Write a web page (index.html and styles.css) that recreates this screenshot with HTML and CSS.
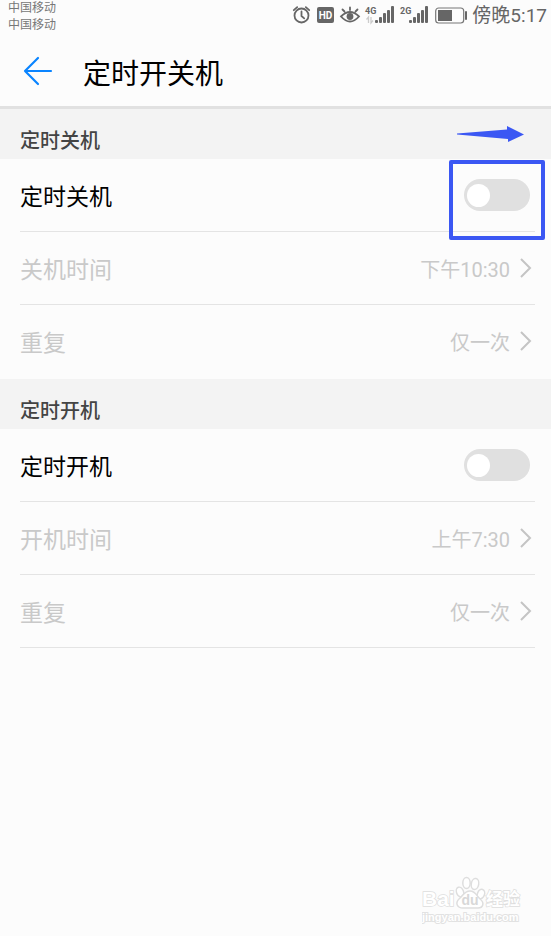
FILE: index.html
```html
<!DOCTYPE html>
<html lang="zh-CN">
<head>
<meta charset="utf-8">
<meta name="viewport" content="width=device-width, initial-scale=1">
<title>定时开关机</title>
<link rel="stylesheet" href="styles.css">
</head>
<body>
<div class="status">
  <div class="carriers"><span>中国移动</span><span>中国移动</span></div>
  <div class="indicators">
    <svg class="status-icons" width="176" height="24" viewBox="0 0 176 24" aria-hidden="true">
      <g fill="none" stroke="#666" stroke-width="1.8" stroke-linecap="round">
        <circle cx="9.500" cy="12.500" r="7"/>
        <path d="M9.500 8.500v4.500l2.700 2.400M1.800 7.200l3.400-3M17.200 7.200l-3.400-3"/>
      </g>
      <rect x="25" y="4" width="17" height="16" rx="2" fill="#666"/>
      <text x="33.500" y="16" class="hd">HD</text>
      <g fill="none" stroke="#666" stroke-width="1.800" stroke-linecap="round">
        <path d="M49 13.500q9-9 18 0q-9 10-18 0zM58 7V4.500M52.500 8.500l-2-2M63.500 8.500l2-2"/>
      </g>
      <circle cx="58" cy="13.500" r="3.400" fill="#666"/>
      <text x="73" y="11" class="net">4G</text>
      <path d="M76.500 20v-6l-2 2.500M79 14v6l2-2.500" fill="none" stroke="#ccc" stroke-width="1.300"/>
      <g fill="#666">
        <rect x="83" y="17" width="3" height="3" rx="1"/><rect x="87" y="14" width="3" height="6" rx="1"/><rect x="91" y="10" width="3" height="10" rx="1"/><rect x="95" y="7" width="3" height="13" rx="1"/><rect x="99" y="3" width="3" height="17" rx="1"/>
        <rect x="117" y="17" width="3" height="3" rx="1"/><rect x="121" y="14" width="3" height="6" rx="1"/><rect x="125" y="10" width="3" height="10" rx="1"/><rect x="129" y="7" width="3" height="13" rx="1"/><rect x="133" y="3" width="3" height="17" rx="1"/>
        <rect x="146" y="7" width="14" height="11"/>
        <rect x="173" y="8" width="2" height="9" rx="1"/>
      </g>
      <text x="108" y="11" class="net">2G</text>
      <rect x="143.700" y="5" width="28" height="15" rx="3" fill="none" stroke="#777" stroke-width="1.200"/>
    </svg>
    <time>傍晚5:17</time>
  </div>
</div>
<header class="titlebar">
  <button class="back" type="button" aria-label="返回">
    <svg width="30" height="30" viewBox="0 0 30 30" fill="none" stroke="#0a84ff" stroke-width="2.200" stroke-linecap="round" stroke-linejoin="round"><path d="M28 15H2M15 2L2 15l13 13"/></svg>
  </button>
  <h1>定时开关机</h1>
</header>
<main>
  <section>
    <div class="section-head">
      <h2>定时关机</h2>
      <svg class="pointer" width="68" height="16" viewBox="0 0 68 16" aria-hidden="true"><path d="M0 7.500L50 3.500V0L67 8.500L51 16V13L0 8.500z" fill="#3b57f3"/></svg>
    </div>
    <div class="list">
      <div class="row">
        <label for="off">定时关机</label>
        <span class="highlighted"><input id="off" class="switch" type="checkbox" role="switch"></span>
      </div>
      <button class="row muted" type="button"><span class="name">关机时间</span><span class="value"><span>下午10:30</span><svg width="13" height="22" viewBox="0 0 13 22"><path d="M2 2l9 9-9 9"/></svg></span></button>
      <button class="row muted plain" type="button"><span class="name">重复</span><span class="value"><span>仅一次</span><svg width="13" height="22" viewBox="0 0 13 22"><path d="M2 2l9 9-9 9"/></svg></span></button>
    </div>
  </section>
  <section>
    <div class="section-head"><h2>定时开机</h2></div>
    <div class="list">
      <div class="row">
        <label for="on">定时开机</label>
        <input id="on" class="switch" type="checkbox" role="switch">
      </div>
      <button class="row muted" type="button"><span class="name">开机时间</span><span class="value"><span>上午7:30</span><svg width="13" height="22" viewBox="0 0 13 22"><path d="M2 2l9 9-9 9"/></svg></span></button>
      <button class="row muted" type="button"><span class="name">重复</span><span class="value"><span>仅一次</span><svg width="13" height="22" viewBox="0 0 13 22"><path d="M2 2l9 9-9 9"/></svg></span></button>
    </div>
  </section>
</main>
<footer class="watermark">
  <svg width="100" height="50" viewBox="0 0 100 50" role="img" aria-label="Baidu 经验">
    <g fill="#fff" stroke="#dedede" stroke-width="1.500">
      <text x="0" y="30" class="bai">Bai</text>
      <ellipse cx="38" cy="16" rx="3.500" ry="5" transform="rotate(-20 38 16)"/>
      <ellipse cx="44.500" cy="7" rx="3.700" ry="5.500"/>
      <ellipse cx="53" cy="8" rx="3.700" ry="5.500" transform="rotate(10 53 8)"/>
      <ellipse cx="59" cy="18" rx="3.500" ry="4.800" transform="rotate(20 59 18)"/>
      <path d="M48 15c6 0 7 6 10 8c5 4 3 9-2 9H41c-6 0-8-5-4-9c4-3 5-8 11-8z"/>
      <text x="64" y="29" class="exp">经验</text>
    </g>
    <text x="48" y="29" class="du">du</text>
    <text x="0" y="45" class="url">jingyan.baidu.com</text>
  </svg>
</footer>
</body>
</html>
```
FILE: styles.css
```css
* { box-sizing: border-box; }

body {
  margin: 0;
  min-height: 100vh;
  display: flex;
  flex-direction: column;
  background: #fcfcfc;
  color: #000;
  font-family: Roboto, "Noto Sans CJK SC", sans-serif;
}

h1, h2 { margin: 0; font-weight: 400; }

button {
  border: 0;
  padding: 0;
  background: none;
  font-family: inherit;
}

.status {
  display: flex;
  justify-content: space-between;
  align-items: flex-start;
  height: 36px;
  padding: 0 4px 0 8px;
  color: #666;
}

.carriers {
  display: flex;
  flex-direction: column;
  font-size: 12px;
  line-height: 17px;
  color: #777;
}

.indicators {
  display: flex;
  gap: 4px;
  padding-top: 3px;
}

time {
  font-size: 19px;
  line-height: 26px;
}

.hd {
  font: 700 10px Roboto, sans-serif;
  fill: #fff;
  text-anchor: middle;
}

.net {
  font: 700 9px Roboto, sans-serif;
  fill: #666;
}

.titlebar {
  display: flex;
  align-items: center;
  gap: 30px;
  height: 73px;
  padding: 0 24px 0 23px;
  border-bottom: 3px solid #e1e1e1;
}

.back { display: flex; }

h1 {
  padding-top: 8px;
  font-size: 28px;
  line-height: 40px;
}

.section-head {
  display: flex;
  justify-content: space-between;
  align-items: center;
  height: 50px;
  padding: 14px 26px 0 20px;
  background: #f3f3f3;
}

h2 {
  font-size: 20px;
  line-height: 30px;
  font-weight: 500;
  color: #444;
}

.pointer { margin-bottom: 14px; }

.list {
  display: flex;
  flex-direction: column;
  padding: 0 16px 1px 20px;
}

.row {
  display: flex;
  justify-content: space-between;
  align-items: center;
  height: 73px;
  padding-right: 5px;
  border-bottom: 1px solid #e4e4e4;
  font-size: 23px;
  line-height: 34px;
}

label, .name { padding-top: 5px; }

.muted {
  padding-right: 3px;
  color: #c9c9c9;
}

.plain { border-bottom-color: transparent; }

.value {
  display: flex;
  align-items: center;
  gap: 9px;
  font-size: 20px;
}

.value span { padding-top: 3px; }

.value path {
  fill: none;
  stroke: #c4c4c4;
  stroke-width: 2;
}

.highlighted {
  position: relative;
  display: flex;
}

.highlighted::after {
  content: "";
  position: absolute;
  inset: -19px -15px -29px;
  border: 4px solid #3b57f3;
  border-radius: 2px;
  pointer-events: none;
}

.switch {
  appearance: none;
  display: flex;
  align-items: center;
  width: 66px;
  height: 32px;
  margin: 0;
  padding: 0 3px;
  border-radius: 16px;
  background: #e0e0e0;
}

.switch::before {
  content: "";
  width: 23px;
  height: 23px;
  border-radius: 50%;
  background: #fff;
}

.switch:checked {
  justify-content: flex-end;
  background: #0a84ff;
}

.watermark {
  display: flex;
  justify-content: flex-end;
  margin-top: auto;
  padding: 0 29px 10px;
}

.watermark text { paint-order: stroke; }

.bai { font: 700 21px "Liberation Sans", sans-serif; }

.exp { font: 700 17px "Noto Sans CJK SC", sans-serif; }

.du {
  font: 700 14px "Liberation Sans", sans-serif;
  fill: #d8d8d8;
  text-anchor: middle;
}

.url {
  font: 700 11px "Liberation Sans", sans-serif;
  fill: #fff;
  stroke: #e2e2e2;
  stroke-width: 2px;
}
```
